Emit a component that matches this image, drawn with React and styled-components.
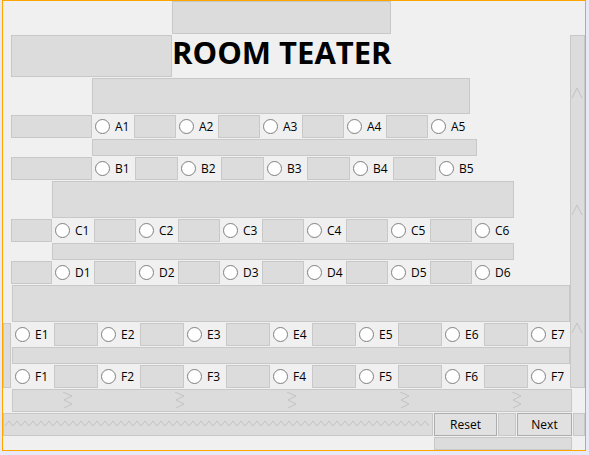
import React from "react";
import styled, { createGlobalStyle } from "styled-components";

const Global = createGlobalStyle`
  html, body { margin: 0; padding: 0; }
  body {
    background: #e6e8f6;
    font-family: "Open Sans", "Noto Sans", sans-serif;
    color: #000;
  }
`;

const Frame = styled.div`
  box-sizing: border-box;
  width: 584px;
  height: 451px;
  margin-left: 2px;
  border: 1px solid #ffa500;
  background: #f0f0f0;
  display: flex;
  flex-direction: column;
  gap: 1px;
  overflow: hidden;
`;

const Filler = styled.div`
  box-sizing: border-box;
  flex: none;
  background: #dcdcdc;
  border: 1px solid #c8c8c8;
  width: ${(p) => p.$w}px;
  height: ${(p) => (p.$h ? `${p.$h}px` : "auto")};
  margin-left: ${(p) => p.$ml || 0}px;
  align-self: ${(p) => (p.$h ? "flex-start" : "stretch")};
  overflow: hidden;
`;

const Middle = styled.div`
  display: flex;
  align-items: stretch;
`;

const MainCol = styled.div`
  width: 567px;
  display: flex;
  flex-direction: column;
  gap: 1px;
`;

const TitleRow = styled.div`
  display: flex;
  height: 42px;
`;

const Title = styled.h1`
  margin: 0;
  align-self: flex-start;
  font-family: "Open Sans", "Noto Sans", sans-serif;
  font-weight: 700;
  font-size: 31px;
  line-height: 34px;
  white-space: nowrap;
`;

const SeatRowBox = styled.div`
  display: flex;
  height: 23px;
  margin-left: ${(p) => p.$ml || 0}px;
`;

const RadioCell = styled.label`
  box-sizing: border-box;
  flex: none;
  width: ${(p) => p.$w}px;
  padding-left: 3px;
  display: flex;
  align-items: center;
  gap: 5px;
  font-size: 12px;
  line-height: 23px;
  white-space: nowrap;
`;

const RadioInput = styled.input`
  appearance: none;
  margin: 0;
  flex: none;
  width: 15px;
  height: 15px;
  border-radius: 50%;
  border: 1px solid #808080;
  background: #fff;
  box-sizing: border-box;
`;

const EFBlock = styled.div`
  display: flex;
  gap: 1px;
`;

const EFCol = styled.div`
  width: 558px;
  display: flex;
  flex-direction: column;
  gap: 1px;
`;

const Drawing = styled.svg`
  display: block;
  width: 100%;
  height: 100%;
`;

const BottomRow = styled.div`
  display: flex;
  gap: 1px;
  height: 23px;
`;

const Button = styled.button`
  box-sizing: border-box;
  flex: none;
  width: ${(p) => p.$w}px;
  height: 23px;
  margin: 0;
  padding: 0;
  background: #e1e1e1;
  border: 1px solid #adadad;
  font-family: "Open Sans", "Noto Sans", sans-serif;
  font-size: 12px;
  color: #000;
`;

const Gapper = styled.div`
  display: flex;
  gap: 0;
`;

function SeatRow({ letter, count, lead, radioW, boxW, ml }) {
  const items = [];
  if (lead) items.push(<Filler key="lead" $w={lead} />);
  for (let i = 1; i <= count; i++) {
    items.push(
      <RadioCell key={`r${i}`} $w={radioW}>
        <RadioInput type="radio" name={`seat-${letter}`} />
        {`${letter}${i}`}
      </RadioCell>
    );
    if (i < count) items.push(<Filler key={`b${i}`} $w={boxW} />);
  }
  return <SeatRowBox $ml={ml}>{items}</SeatRowBox>;
}

const MARK = "#c3c3c3";

function VerticalSpring() {
  const tops = [52, 169, 287];
  return (
    <Drawing viewBox="0 0 13 351" preserveAspectRatio="none">
      {tops.map((t) => (
        <polyline key={t} points={`1,${t + 10} 6,${t} 11,${t + 10}`} fill="none" stroke={MARK} strokeWidth="1" />
      ))}
    </Drawing>
  );
}

function HorizontalSpring() {
  const xs = [50, 162, 274, 387, 499];
  return (
    <Drawing viewBox="0 0 558 21" preserveAspectRatio="none">
      {xs.map((x) => (
        <polyline
          key={x}
          points={`${x},2 ${x + 9},6 ${x + 1},10 ${x + 9},14 ${x + 1},18`}
          fill="none"
          stroke={MARK}
          strokeWidth="1"
        />
      ))}
    </Drawing>
  );
}

function Wave() {
  const pts = [];
  let up = false;
  for (let x = 1; x <= 426; x += 4) {
    pts.push(`${x},${up ? 7 : 12}`);
    up = !up;
  }
  return (
    <Drawing viewBox="0 0 428 21" preserveAspectRatio="none">
      <polyline points={pts.join(" ")} fill="none" stroke={MARK} strokeWidth="1" />
    </Drawing>
  );
}

export default function App() {
  return (
    <>
      <Global />
      <Frame>
        <Filler $ml={169} $w={219} $h={33} />
        <Middle>
          <MainCol>
            <TitleRow>
              <Filler $ml={8} $w={161} />
              <Title>ROOM TEATER</Title>
            </TitleRow>
            <Filler $ml={89} $w={378} $h={36} />
            <SeatRow letter="A" count={5} lead={81} radioW={42} boxW={42} ml={8} />
            <Filler $ml={89} $w={385} $h={17} />
            <SeatRow letter="B" count={5} lead={81} radioW={43} boxW={43} ml={8} />
            <Filler $ml={49} $w={462} $h={37} />
            <SeatRow letter="C" count={6} lead={41} radioW={42} boxW={42} ml={8} />
            <Filler $ml={49} $w={462} $h={17} />
            <SeatRow letter="D" count={6} lead={41} radioW={42} boxW={42} ml={8} />
            <Filler $ml={9} $w={558} $h={37} />
            <EFBlock>
              <Filler $w={8} />
              <EFCol>
                <SeatRow letter="E" count={7} radioW={42} boxW={44} />
                <Filler $w={558} $h={17} />
                <SeatRow letter="F" count={7} radioW={42} boxW={44} />
              </EFCol>
            </EFBlock>
          </MainCol>
          <Filler $w={15}>
            <VerticalSpring />
          </Filler>
        </Middle>
        <Filler $ml={9} $w={560} $h={23}>
          <HorizontalSpring />
        </Filler>
        <BottomRow>
          <Filler $w={430}>
            <Wave />
          </Filler>
          <Button $w={63}>Reset</Button>
          <Filler $w={18} />
          <Button $w={55}>Next</Button>
          <Filler $w={12} />
        </BottomRow>
        <Filler $ml={431} $w={138} $h={13} />
      </Frame>
    </>
  );
}
